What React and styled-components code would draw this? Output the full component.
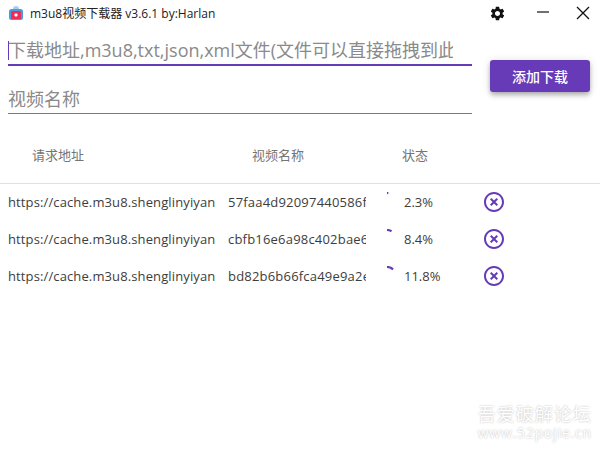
import styled, { createGlobalStyle } from 'styled-components';
import { MdSettings, MdHighlightOff } from 'react-icons/md';

const GlobalStyle = createGlobalStyle`
  html, body {
    margin: 0;
    padding: 0;
    background: #fff;
  }
  body {
    font-family: "Open Sans", "Noto Sans CJK SC", sans-serif;
  }
`;

const Window = styled.div`
  position: relative;
  width: 600px;
  height: 450px;
  overflow: hidden;
  background: #fff;
`;

const TitleBar = styled.div`
  display: flex;
  align-items: center;
  height: 26px;
  padding-left: 8px;
`;

const TitleText = styled.span`
  margin-left: 6px;
  font-size: 12px;
  color: #222;
  white-space: nowrap;
`;

const TitleActions = styled.div`
  display: flex;
  align-items: center;
  margin-left: auto;
`;

const ActionSlot = styled.div`
  display: flex;
  justify-content: center;
  align-items: center;
  width: ${(p) => p.$width}px;
  height: 26px;
  color: #111;
`;

const FormArea = styled.div`
  display: flex;
  align-items: flex-start;
  padding: 10px 10px 0 8px;
  gap: 18px;
`;

const Fields = styled.div`
  display: flex;
  flex-direction: column;
  width: 464px;
  gap: 19px;
`;

const Field = styled.div`
  display: flex;
  height: ${(p) => (p.$focused ? 30 : 29)}px;
  box-sizing: border-box;
  border-bottom: ${(p) => (p.$focused ? '2px solid #673ab7' : '1px solid #7a7a7a')};
  font-size: 18px;
  line-height: 28px;
  color: #8a8a8a;
`;

const FieldText = styled.div`
  max-width: 445px;
  white-space: nowrap;
  overflow: hidden;
`;

const Caret = styled.span`
  display: inline-block;
  width: 1px;
  height: 19px;
  margin-right: -1px;
  vertical-align: -3px;
  background: #673ab7;
`;

const AddButton = styled.button`
  width: 100px;
  height: 32px;
  margin-top: 24px;
  border: none;
  border-radius: 3px;
  background: #673ab7;
  color: #fff;
  font-family: inherit;
  font-size: 14px;
  font-weight: 500;
  box-shadow: 0 2px 4px -1px rgba(0, 0, 0, 0.2), 0 4px 5px rgba(0, 0, 0, 0.14), 0 1px 10px rgba(0, 0, 0, 0.12);
`;

const ListHeader = styled.div`
  display: flex;
  align-items: center;
  height: 70px;
  box-sizing: border-box;
  padding-top: 12px;
  border-bottom: 1px solid #e0e0e0;
  font-size: 13px;
  color: #757575;
`;

const HeaderCell = styled.div`
  width: ${(p) => p.$width}px;
  padding-left: ${(p) => p.$indent}px;
  box-sizing: border-box;
`;

const RowList = styled.div`
  margin-top: -1px;
`;

const Row = styled.div`
  display: grid;
  grid-template-columns: 220px 138px 38px 78px 24px;
  align-items: center;
  height: 37px;
  padding-left: 8px;
  font-size: 13px;
  color: #3d3d3d;
`;

const UrlCell = styled.div`
  width: 208px;
  overflow: hidden;
  white-space: nowrap;
  letter-spacing: 0.12px;
`;

const NameCell = styled.div`
  overflow: hidden;
  white-space: nowrap;
  letter-spacing: 0.2px;
`;

const PercentCell = styled.div`
  white-space: nowrap;
`;

const ProgressCell = styled.div`
  display: flex;
  padding-left: 11px;
`;

const CancelButton = styled.div`
  display: flex;
  color: #673ab7;
`;

const Watermark = styled.div`
  position: absolute;
  right: 8px;
  bottom: 9px;
  text-align: center;
  color: #fff;
  text-shadow: 0 0 2px rgba(0, 0, 0, 0.3);
`;

const WatermarkTitle = styled.div`
  font-size: 18px;
  line-height: 22px;
  letter-spacing: 1px;
`;

const WatermarkUrl = styled.div`
  font-size: 14px;
  line-height: 16px;
  letter-spacing: 0.8px;
`;

const AppLogo = () => (
  <svg width="16" height="16" viewBox="0 0 16 16">
    <path d="M5 4a3 3 0 0 1 6 0v1H5z" fill="#a8cdee" />
    <rect x="1" y="4" width="14" height="11" rx="2.5" fill="#4a9be0" />
    <rect x="3" y="6" width="10" height="8" rx="1" fill="#ef2d56" />
    <rect x="6.5" y="8.5" width="3" height="3" rx="1" fill="#fff" />
  </svg>
);

const MinimizeIcon = () => (
  <svg width="14" height="14" viewBox="0 0 14 14">
    <path d="M1 6h12" stroke="#111" strokeWidth="1.2" fill="none" />
  </svg>
);

const CloseIcon = () => (
  <svg width="14" height="14" viewBox="0 0 14 14">
    <path d="M1 1l12 12M13 1L1 13" stroke="#111" strokeWidth="1.3" fill="none" />
  </svg>
);

// small arc of a circular progress, starts at 12 o'clock
const Spinner = ({ value }) => {
  const r = 9;
  const a = (value / 100) * 2 * Math.PI;
  const x = 10 + r * Math.sin(a);
  const y = 10 - r * Math.cos(a);
  return (
    <svg width="20" height="20" viewBox="0 0 20 20">
      <path d={`M10 1A${r} ${r} 0 0 1 ${x} ${y}`} stroke="#673ab7" strokeWidth="2.2" fill="none" />
    </svg>
  );
};

const tasks = [
  { url: 'https://cache.m3u8.shenglinyiyan', name: '57faa4d92097440586f1a2b3', progress: 2.3 },
  { url: 'https://cache.m3u8.shenglinyiyan', name: 'cbfb16e6a98c402bae6d7e80', progress: 8.4 },
  { url: 'https://cache.m3u8.shenglinyiyan', name: 'bd82b6b66fca49e9a2e4c1f7', progress: 11.8 },
];

const App = () => (
  <Window>
    <GlobalStyle />
    <TitleBar>
      <AppLogo />
      <TitleText>m3u8视频下载器 v3.6.1 by:Harlan</TitleText>
      <TitleActions>
        <ActionSlot $width={46}>
          <MdSettings size={17} />
        </ActionSlot>
        <ActionSlot $width={46}>
          <MinimizeIcon />
        </ActionSlot>
        <ActionSlot $width={34}>
          <CloseIcon />
        </ActionSlot>
      </TitleActions>
    </TitleBar>
    <FormArea>
      <Fields>
        <Field $focused>
          <FieldText>
            <Caret />
            下载地址,m3u8,txt,json,xml文件(文件可以直接拖拽到此处)
          </FieldText>
        </Field>
        <Field>
          <FieldText>视频名称</FieldText>
        </Field>
      </Fields>
      <AddButton>添加下载</AddButton>
    </FormArea>
    <ListHeader>
      <HeaderCell $width={252} $indent={32}>请求地址</HeaderCell>
      <HeaderCell $width={150} $indent={0}>视频名称</HeaderCell>
      <HeaderCell $width={100} $indent={0}>状态</HeaderCell>
    </ListHeader>
    <RowList>
      {tasks.map((t) => (
        <Row key={t.name}>
          <UrlCell>{t.url}</UrlCell>
          <NameCell>{t.name}</NameCell>
          <ProgressCell>
            <Spinner value={t.progress} />
          </ProgressCell>
          <PercentCell>{t.progress}%</PercentCell>
          <CancelButton>
            <MdHighlightOff size={24} />
          </CancelButton>
        </Row>
      ))}
    </RowList>
    <Watermark>
      <WatermarkTitle>吾爱破解论坛</WatermarkTitle>
      <WatermarkUrl>www.52pojie.cn</WatermarkUrl>
    </Watermark>
  </Window>
);

export default App;
